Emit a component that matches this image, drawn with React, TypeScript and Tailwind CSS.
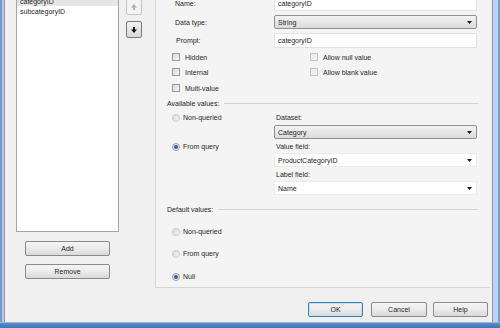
import React from "react";

function Tri() {
  return (
    <svg width="5" height="3" viewBox="0 0 5 3" className="shrink-0">
      <path d="M0 0h5L2.5 3z" fill="#1a1a1a" />
    </svg>
  );
}

function Arrow({ up, color }: { up?: boolean; color: string }) {
  return (
    <svg width="6" height="6" viewBox="0 0 6 6" className={up ? "rotate-180" : ""}>
      <path d="M2 0h2v2.5h2L3 6 0 2.5h2z" fill={color} />
    </svg>
  );
}

function TextBox({ value, h }: { value: string; h: string }) {
  return (
    <div className={`w-[203px] ${h} bg-white border border-[#e2e2e2] flex items-center pl-[3px]`}>
      {value}
    </div>
  );
}

function Select({ value, gray }: { value: string; gray?: boolean }) {
  return (
    <div
      className={
        gray
          ? "w-[203px] h-[14px] rounded-[2px] border border-[#8f9092] bg-linear-to-b from-[#f3f3f3] to-[#dadada] flex items-center justify-between pl-[3px] pr-[4px]"
          : "w-[203px] h-[14px] bg-white border border-[#ececec] flex items-center justify-between pl-[3px] pr-[4px]"
      }
    >
      <span>{value}</span>
      <Tri />
    </div>
  );
}

function Check({ label, disabled }: { label: string; disabled?: boolean }) {
  return (
    <div className="flex items-center">
      <div
        className={
          disabled
            ? "w-[8px] h-[8px] border border-[#c2c2c2] bg-linear-to-br from-[#e8e8e8] to-[#f7f7f7]"
            : "w-[8px] h-[8px] border border-[#9a9a9a] bg-linear-to-br from-[#d9d9d9] to-[#f7f7f7]"
        }
      />
      <span className="ml-[5px]">{label}</span>
    </div>
  );
}

function Radio({ label, checked, light }: { label: string; checked?: boolean; light?: boolean }) {
  return (
    <div className="flex items-center h-[13px]">
      <div
        className={`w-[8px] h-[8px] rounded-full border ${
          light ? "border-[#c8c8c8]" : "border-[#9c9c9c]"
        } bg-linear-to-br from-[#dadada] to-[#f8f8f8] flex items-center justify-center`}
      >
        {checked && <div className="w-[4px] h-[4px] rounded-full bg-[#2f62a3]" />}
      </div>
      <span className="ml-[3px]">{label}</span>
    </div>
  );
}

function Btn({ label, w, focused }: { label: string; w: string; focused?: boolean }) {
  return (
    <div
      className={`${w} h-[15px] rounded-[2px] border ${
        focused ? "border-[#3c7fb1] shadow-[inset_0_0_0_1px_#bfe2f7]" : "border-[#8a8a8a]"
      } bg-linear-to-b from-[#f4f4f4] via-[#ebebeb] to-[#d9d9d9] flex items-center justify-center`}
    >
      {label}
    </div>
  );
}

function GroupTitle({ label }: { label: string }) {
  return (
    <div className="h-[14px] flex items-center pl-[11px] pr-[12px]">
      <span>{label}</span>
      <div className="flex-1 h-px bg-[#d3d3d3] ml-[5px]" />
    </div>
  );
}

export default function App() {
  return (
    <div className="w-[500px] h-[328px] overflow-hidden flex flex-col bg-[#f0f0f0] text-[7px] leading-none text-[#262626] font-['Liberation_Sans',Arial,sans-serif]">
      <div className="flex h-[322px]">
        {/* left window frame */}
        <div className="w-[5px] bg-[#b4cbe8] border-l-2 border-l-[#7199cd] border-r border-r-[#8b9bb1]" />

        <div className="flex-1 flex flex-col min-w-0">
          <div className="flex mt-[-6px]">
            {/* parameter list */}
            <div className="ml-[11px] w-[103px] flex flex-col">
              <div className="h-[238px] bg-white border border-[#a3a7ad] pt-[1px]">
                <div className="h-[10px] bg-[#e6e6e6] flex items-center pl-[3px]">categoryID</div>
                <div className="h-[10px] flex items-center pl-[3px]">subcategoryID</div>
              </div>
              <div className="mt-[9px] self-center">
                <Btn label="Add" w="w-[85px]" />
              </div>
              <div className="mt-[8px] self-center">
                <Btn label="Remove" w="w-[85px]" />
              </div>
            </div>

            {/* up / down */}
            <div className="ml-[7px] flex flex-col">
              <div className="mt-[5px] w-[16px] h-[16px] rounded-[2px] border border-[#c3c6c9] bg-[#f4f4f4] flex items-center justify-center">
                <Arrow up color="#b0b0b0" />
              </div>
              <div className="mt-[6px] w-[16px] h-[17px] rounded-[2px] border border-[#7a7a7a] bg-linear-to-b from-[#f3f3f3] to-[#d8d8d8] flex items-center justify-center">
                <Arrow color="#111" />
              </div>
            </div>

            {/* properties panel */}
            <div className="ml-[13px] w-[335px] h-[294px] bg-[#f4f4f4] border-l border-b border-[#d6d6d6] flex flex-col pt-[2px]">
              <div className="flex items-center pl-[19px]">
                <span className="w-[99px]">Name:</span>
                <TextBox value="categoryID" h="h-[15px]" />
              </div>
              <div className="mt-[4px] flex items-center pl-[19px]">
                <span className="w-[99px]">Data type:</span>
                <Select value="String" gray />
              </div>
              <div className="mt-[4px] flex items-center pl-[19px]">
                <span className="w-[99px] pl-[1px]">Prompt:</span>
                <TextBox value="categoryID" h="h-[15px]" />
              </div>

              <div className="mt-[2px] h-[14px] flex items-center pl-[16px]">
                <div className="w-[138px]">
                  <Check label="Hidden" />
                </div>
                <Check label="Allow null value" disabled />
              </div>
              <div className="mt-[1px] h-[14px] flex items-center pl-[16px]">
                <div className="w-[138px]">
                  <Check label="Internal" />
                </div>
                <Check label="Allow blank value" disabled />
              </div>
              <div className="mt-[2px] h-[14px] flex items-center pl-[16px]">
                <Check label="Multi-value" />
              </div>

              <div className="mt-[1px]">
                <GroupTitle label="Available values:" />
              </div>
              <div className="mt-[1px] flex pl-[16px]">
                <div className="w-[102px] flex flex-col">
                  <Radio label="Non-queried" light />
                  <div className="mt-[16px]">
                    <Radio label="From query" checked />
                  </div>
                </div>
                <div className="flex flex-col">
                  <div className="h-[13px] flex items-center pl-[2px]">Dataset:</div>
                  <div className="mt-[1px]">
                    <Select value="Category" gray />
                  </div>
                  <div className="mt-[1px] h-[13px] flex items-center pl-[2px]">Value field:</div>
                  <Select value="ProductCategoryID" />
                  <div className="mt-[1px] h-[13px] flex items-center pl-[2px]">Label field:</div>
                  <Select value="Name" />
                </div>
              </div>

              <div className="mt-[7px]">
                <GroupTitle label="Default values:" />
              </div>
              <div className="flex flex-col pl-[16px]">
                <div className="mt-[9px]">
                  <Radio label="Non-queried" light />
                </div>
                <div className="mt-[9px]">
                  <Radio label="From query" light />
                </div>
                <div className="mt-[10px]">
                  <Radio label="Null" checked />
                </div>
              </div>
            </div>
          </div>

          {/* dialog buttons */}
          <div className="mt-[14px] flex justify-end pr-[4px]">
            <Btn label="OK" w="w-[55px]" focused />
            <div className="ml-[8px]">
              <Btn label="Cancel" w="w-[56px]" />
            </div>
            <div className="ml-[6px]">
              <Btn label="Help" w="w-[55px]" />
            </div>
          </div>
        </div>

        {/* right window frame */}
        <div className="w-[8px] bg-[#bcd3ee] border-l border-l-[#8b9bb1] border-r-2 border-r-[#7aa0d2]" />
      </div>
      {/* bottom window frame */}
      <div className="h-[6px] border-t border-t-[#9fb3cd] bg-linear-to-b from-[#5b8bcb] to-[#3f72b8]" />
    </div>
  );
}
